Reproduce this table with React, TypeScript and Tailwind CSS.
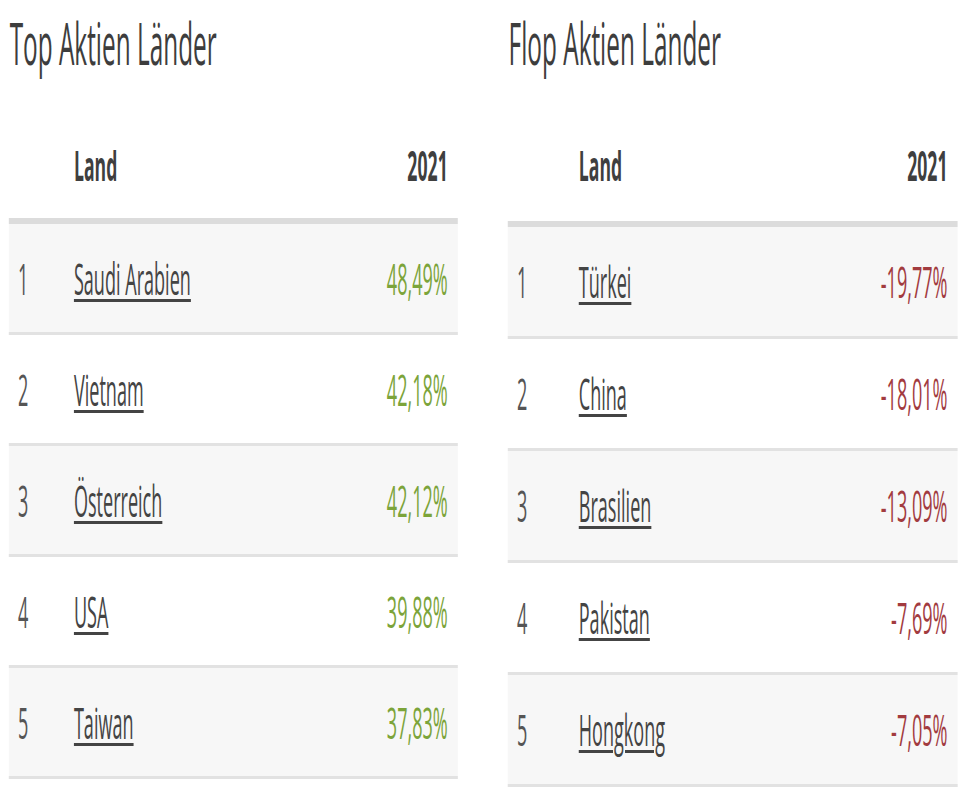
import React from "react";

type Row = { rank: number; name: string; value: string };

const top: Row[] = [
  { rank: 1, name: "Saudi Arabien", value: "48,49%" },
  { rank: 2, name: "Vietnam", value: "42,18%" },
  { rank: 3, name: "Österreich", value: "42,12%" },
  { rank: 4, name: "USA", value: "39,88%" },
  { rank: 5, name: "Taiwan", value: "37,83%" },
];

const flop: Row[] = [
  { rank: 1, name: "Türkei", value: "-19,77%" },
  { rank: 2, name: "China", value: "-18,01%" },
  { rank: 3, name: "Brasilien", value: "-13,09%" },
  { rank: 4, name: "Pakistan", value: "-7,69%" },
  { rank: 5, name: "Hongkong", value: "-7,05%" },
];

function Table({
  title,
  rows,
  positive,
  flopSide,
}: {
  title: string;
  rows: Row[];
  positive: boolean;
  flopSide?: boolean;
}) {
  const numCol = flopSide ? "grid-cols-[147px_1fr_auto]" : "grid-cols-[133px_1fr_auto]";
  return (
    <div className="flex flex-col">
      <h2 className="mt-[14px] h-[58px] text-[58px] leading-[58px] font-normal text-[#3d3d3d] pl-[2px]">
        {title}
      </h2>
      <div
        className={`grid ${numCol} mt-[72px] h-[42px] text-[42px] leading-[42px] font-bold text-[#3f3f3f] pl-[22px] pr-[24px] ${
          flopSide ? "mb-[35px]" : "mb-[32px]"
        }`}
      >
        <span></span>
        <span>Land</span>
        <span className="text-right">2021</span>
      </div>
      <div className="border-t-[6px] border-[#dcdcdc]">
        {rows.map((r, i) => (
          <div
            key={r.rank}
            className={`grid ${numCol} items-center ${
              flopSide ? "h-[112px]" : "h-[111px]"
            } border-b-[3px] border-[#e2e2e2] pl-[22px] pr-[24px] text-[43px] leading-[43px] ${
              i % 2 === 0 ? "bg-[#f7f7f7]" : "bg-white"
            }`}
          >
            <span className="text-[#555555]">{r.rank}</span>
            <span>
              <a
                href="#"
                className="text-[#444444] underline decoration-[3px] underline-offset-[4px]"
              >
                {r.name}
              </a>
            </span>
            <span className={`text-right ${positive ? "text-[#7ca43a]" : "text-[#a23b3f]"}`}>
              {r.value}
            </span>
          </div>
        ))}
      </div>
    </div>
  );
}

export default function App() {
  return (
    <div
      className="w-[964px] h-[798px] overflow-hidden bg-white"
      style={{ fontFamily: '"Open Sans", "Noto Sans", sans-serif' }}
    >
      <div className="w-[2295px] origin-top-left scale-x-[0.42] grid grid-cols-[1069px_1071px] gap-x-[119px] pl-[21px]">
        <Table title="Top Aktien Länder" rows={top} positive />
        <Table title="Flop Aktien Länder" rows={flop} positive={false} flopSide />
      </div>
    </div>
  );
}
